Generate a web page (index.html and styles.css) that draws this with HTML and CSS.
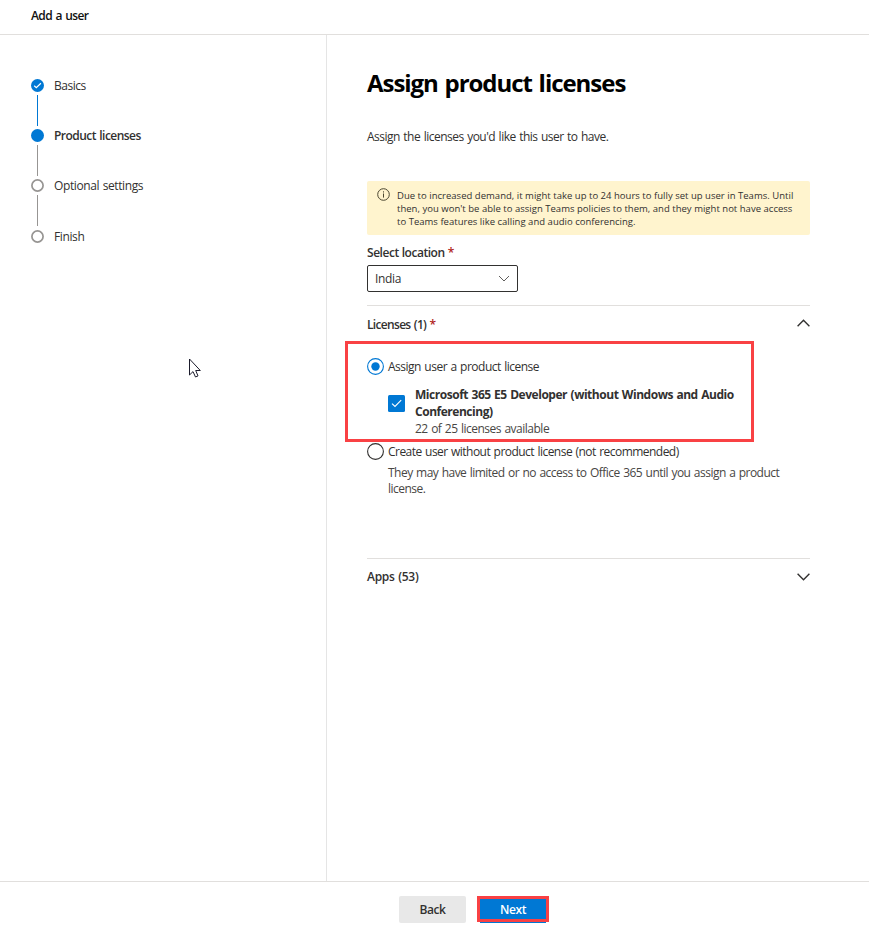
FILE: index.html
```
<!DOCTYPE html>
<html lang="en">
<head>
<meta charset="utf-8">
<title>Add a user</title>
<link rel="stylesheet" href="styles.css">
</head>
<body>
<header class="topbar"><span>Add a user</span></header>
<div class="columns">
  <nav class="steps">
    <div class="step">
      <div class="rail"><svg class="dot" viewBox="0 0 13 13"><circle cx="6.5" cy="6.5" r="6.5" fill="#0078d4"/><path d="M3.2 6.7 5.3 8.7 9.9 4.2" fill="none" stroke="#fff" stroke-width="1.2"/></svg><i class="line done"></i></div>
      <span class="step-label basics">Basics</span>
    </div>
    <div class="step">
      <div class="rail"><svg class="dot" viewBox="0 0 13 13"><circle cx="6.5" cy="6.5" r="6.5" fill="#0078d4"/></svg><i class="line"></i></div>
      <span class="step-label current">Product licenses</span>
    </div>
    <div class="step">
      <div class="rail"><svg class="dot" viewBox="0 0 13 13"><circle cx="6.5" cy="6.5" r="5.6" fill="#fff" stroke="#979593" stroke-width="1.7"/></svg><i class="line"></i></div>
      <span class="step-label">Optional settings</span>
    </div>
    <div class="step last">
      <div class="rail"><svg class="dot" viewBox="0 0 13 13"><circle cx="6.5" cy="6.5" r="5.6" fill="#fff" stroke="#979593" stroke-width="1.7"/></svg></div>
      <span class="step-label">Finish</span>
    </div>
  </nav>
  <main class="content">
    <h1>Assign product licenses</h1>
    <p class="intro">Assign the licenses you'd like this user to have.</p>
    <div class="notice">
      <svg class="info" viewBox="0 0 13 13"><circle cx="6.5" cy="6.5" r="5.8" fill="none" stroke="#4b4631"/><path d="M6.5 5.5V9.6M6.5 3.3V4.5" stroke="#4b4631"/></svg>
      <p>Due to increased demand, it might take up to 24 hours to fully set up user in Teams. Until<br>then, you won't be able to assign Teams policies to them, and they might not have access<br>to Teams features like calling and audio conferencing.</p>
    </div>
    <div class="label location">Select location <b class="req">*</b></div>
    <div class="select"><span>India</span><svg class="chev" viewBox="0 0 12 7"><path d="M1 1 6 6 11 1" fill="none" stroke="#605e5c"/></svg></div>
    <section class="licenses">
      <div class="section-head"><div class="label license-count">Licenses (1) <b class="req">*</b></div><svg class="toggle" viewBox="0 0 13 8"><path d="M.6 7.2 6.5 1.3 12.4 7.2" fill="none" stroke="#323130" stroke-width="1.4"/></svg></div>
      <div class="highlight">
        <div class="option"><svg class="radio" viewBox="0 0 17 17"><circle cx="8.5" cy="8.5" r="7.9" fill="#fff" stroke="#0078d4" stroke-width="1.1"/><circle cx="8.5" cy="8.5" r="4.2" fill="#0078d4"/></svg><span>Assign user a product license</span></div>
        <div class="product">
          <svg class="check" viewBox="0 0 17 17"><rect width="17" height="17" rx="1.5" fill="#0078d4"/><path d="M4 8.6 7 11.5 13.2 5.2" fill="none" stroke="#fff" stroke-width="1.1"/></svg>
          <div class="product-text"><strong>Microsoft 365 E5 Developer (without Windows and Audio<br>Conferencing)</strong><br><span class="available">22 of 25 licenses available</span></div>
        </div>
      </div>
      <div class="option second"><svg class="radio" viewBox="0 0 17 17"><circle cx="8.5" cy="8.5" r="7.9" fill="#fff" stroke="#323130" stroke-width="1.1"/></svg><span>Create user without product license (not recommended)</span></div>
      <p class="hint">They may have limited or no access to Office 365 until you assign a product<br>license.</p>
    </section>
    <section class="apps section-head"><div class="label apps-count">Apps (53)</div><svg class="toggle" viewBox="0 0 13 8"><path d="M.6 .8 6.5 6.7 12.4 .8" fill="none" stroke="#323130" stroke-width="1.4"/></svg></section>
  </main>
</div>
<footer class="actions"><button class="back">Back</button><button class="next">Next</button></footer>
<svg class="cursor" viewBox="0 0 13 20"><path d="M1.5 1V17L5 13.6 7.5 19 10 17.9 7.7 12.5H12.3Z" fill="#fff" stroke="#1b1b2b"/></svg>
</body>
</html>
```
FILE: styles.css
```
*{box-sizing:border-box}
body{margin:0;height:930px;display:flex;flex-direction:column;background:#fff;color:#323130;font:12px/16px "Open Sans",sans-serif;letter-spacing:-.5px;word-spacing:.8px;overflow:hidden}
svg{display:block;flex:none}
p,h1{margin:0}
.topbar{height:35px;border-bottom:1px solid #e1dfdd;padding:8px 0 0 31px;color:#111;font-weight:600;letter-spacing:-.58px}
.columns{flex:1;display:flex}
.steps{width:327px;border-right:1px solid #e5e5e5;padding:44px 0 0 31px}
.step{display:flex;gap:10px;height:50px}
.step.last{padding-top:1px}
.rail{width:13px;display:flex;flex-direction:column;align-items:center}
.dot{width:13px;height:13px}
.line{width:1px;height:31px;margin-top:3px;background:#979593}
.line.done{background:#0078d4}
.step-label{margin-top:-1px;letter-spacing:-.39px}
.step-label.basics{letter-spacing:-.5px}
.step-label.current{font-weight:600;letter-spacing:-.54px}
.content{width:483px;padding:0 0 0 40px;white-space:nowrap}
h1{margin-top:31px;font-size:24px;line-height:34px;color:#000;font-weight:700;letter-spacing:-1.04px;word-spacing:1.5px}
.intro{margin-top:29px}
.notice{margin-top:36px;height:54px;background:#fff4ce;border-radius:2px;display:flex;gap:7px;padding:8px 0 0 10px;font-size:9.5px;line-height:13px;letter-spacing:.02px;word-spacing:0}
.info{width:13px;height:13px;margin-top:-1px}
.label{font-weight:600}
.location{margin-top:10px;letter-spacing:-.47px;word-spacing:.4px}
.license-count{letter-spacing:-.68px;word-spacing:.8px}
.apps-count{letter-spacing:-.28px}
.req{color:#b01c20;font-weight:600}
.select{margin-top:4px;width:151px;height:27px;border:1px solid #323130;border-radius:2px;display:flex;align-items:center;justify-content:space-between;padding:0 7px;letter-spacing:-.36px}
.chev{width:12px;height:7px}
.licenses{margin-top:13px;border-top:1px solid #e1dfdd;height:253px}
.section-head{display:flex;justify-content:space-between;padding-top:11px}
.toggle{width:13px;height:8px;margin-top:2px}
.highlight{margin:8px 0 0 -22px;width:409px;height:101px;border:3px solid #f94144;padding:14px 0 0 19px}
.option{display:flex;align-items:center;gap:4px;height:17px;letter-spacing:-.5px}
.radio,.check{width:17px;height:17px}
.product{display:flex;gap:10px;padding-left:21px;margin-top:11px;line-height:17px}
.product strong{font-weight:700;letter-spacing:-.47px}
.check{margin-top:9px}
.second{margin-top:1px;letter-spacing:-.53px}
.hint{margin:5px 0 0 21px;color:#484644;letter-spacing:-.52px}
.available{color:#484644}
.apps{border-top:1px solid #e1dfdd;padding-top:10px}
.apps .toggle{margin-top:4px}
.actions{height:49px;border-top:1px solid #e1dfdd;display:flex;gap:11px;padding:14px 0 0 399px}
button{font:600 12px/16px "Open Sans",sans-serif;border:0;border-radius:2px;height:27px;padding:0;color:#323130;letter-spacing:-.4px}
.back{width:67px;background:#e8e8e8}
.next{width:72px;height:26px;padding-top:1px;background:#0078d4;color:#fff;border:3px solid #f94144;border-radius:0;box-shadow:0 4px 0 -3px #0078d4}
.cursor{position:absolute;left:188px;top:358px;width:13px;height:20px}
```
